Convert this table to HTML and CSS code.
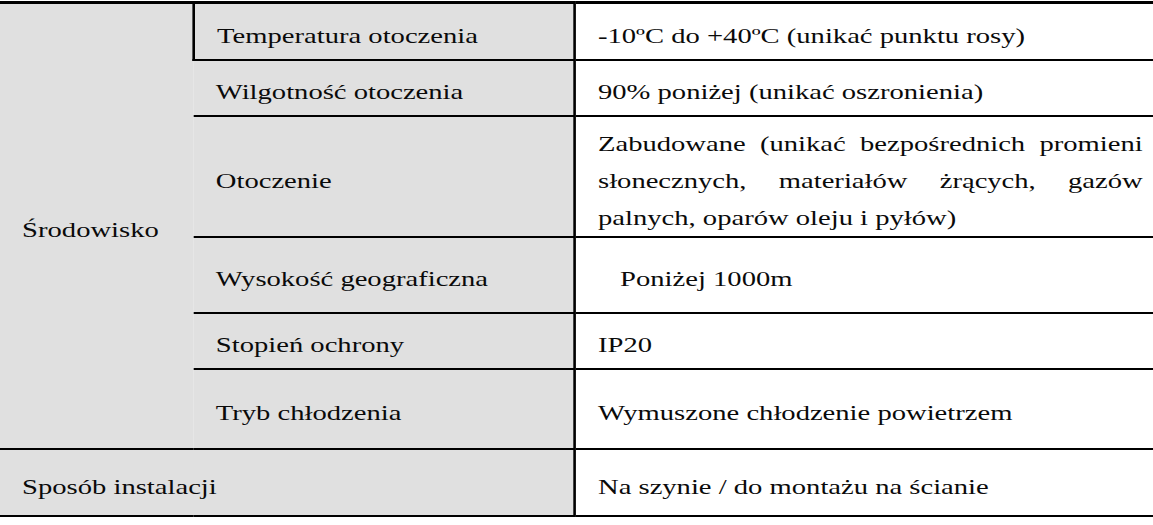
FILE: index.html
```html
<!DOCTYPE html>
<html lang="pl">
<head>
<meta charset="utf-8">
<link rel="stylesheet" href="styles.css">
</head>
<body>
<table class="spec">
  <colgroup>
    <col class="c1"><col class="c2"><col class="c3">
  </colgroup>
  <tbody>
    <tr class="r1">
      <td class="grey" rowspan="6">Środowisko</td>
      <td class="grey">Temperatura otoczenia</td>
      <td>-10ºC do +40ºC (unikać punktu rosy)</td>
    </tr>
    <tr class="r2">
      <td class="grey">Wilgotność otoczenia</td>
      <td>90% poniżej (unikać oszronienia)</td>
    </tr>
    <tr class="r3">
      <td class="grey">Otoczenie</td>
      <td class="para">
        <span class="ln">Zabudowane (unikać bezpośrednich promieni</span>
        <span class="ln">słonecznych, materiałów żrących, gazów</span>
        <span class="ln last">palnych, oparów oleju i pyłów)</span>
      </td>
    </tr>
    <tr class="r4">
      <td class="grey">Wysokość geograficzna</td>
      <td><span class="indent">Poniżej 1000m</span></td>
    </tr>
    <tr class="r5">
      <td class="grey">Stopień ochrony</td>
      <td>IP20</td>
    </tr>
    <tr class="r6">
      <td class="grey">Tryb chłodzenia</td>
      <td>Wymuszone chłodzenie powietrzem</td>
    </tr>
    <tr class="r7">
      <td class="grey" colspan="2">Sposób instalacji</td>
      <td>Na szynie / do montażu na ścianie</td>
    </tr>
  </tbody>
</table>
</body>
</html>
```

FILE: styles.css
```css
html, body {
  margin: 0;
  padding: 0;
  background: #ffffff;
  overflow: hidden;
}

body {
  font-family: "Liberation Serif", "Times New Roman", serif;
  font-size: 22px;
  color: #0a0a0a;
}

/* the source document is stretched horizontally by 1.3 */
.spec {
  width: 887px;
  margin-top: 1px;
  border-collapse: collapse;
  table-layout: fixed;
  transform: scaleX(1.3);
  transform-origin: 0 0;
}

.c1 { width: 149px; }
.c2 { width: 293px; }

.spec td {
  border-top: 2px solid #000;
  border-bottom: 2px solid #000;
  border-left: 2px solid #000;
  padding: 8px 8px 0 17px;
  vertical-align: middle;
  line-height: 30px;
  background: #ffffff;
}

.spec tr:first-child td {
  border-top-width: 3px;
}

.spec td:first-child {
  border-left: none;
  padding-left: 17px;
}

.spec td.grey {
  background: #e0e0e0;
}

.r1 td { height: 47px; }
.r2 td { height: 46px; }
.r3 td { height: 111px; }
.r4 td { height: 66px; }
.r5 td { height: 46px; }
.r6 td { height: 70px; }
.r7 td { height: 57px; }

.para {
  line-height: 37px;
}

.ln {
  display: block;
  text-align: justify;
  text-align-last: justify;
  line-height: 37px;
}

.ln.last {
  text-align-last: left;
}

.indent {
  padding-left: 17px;
}
```
